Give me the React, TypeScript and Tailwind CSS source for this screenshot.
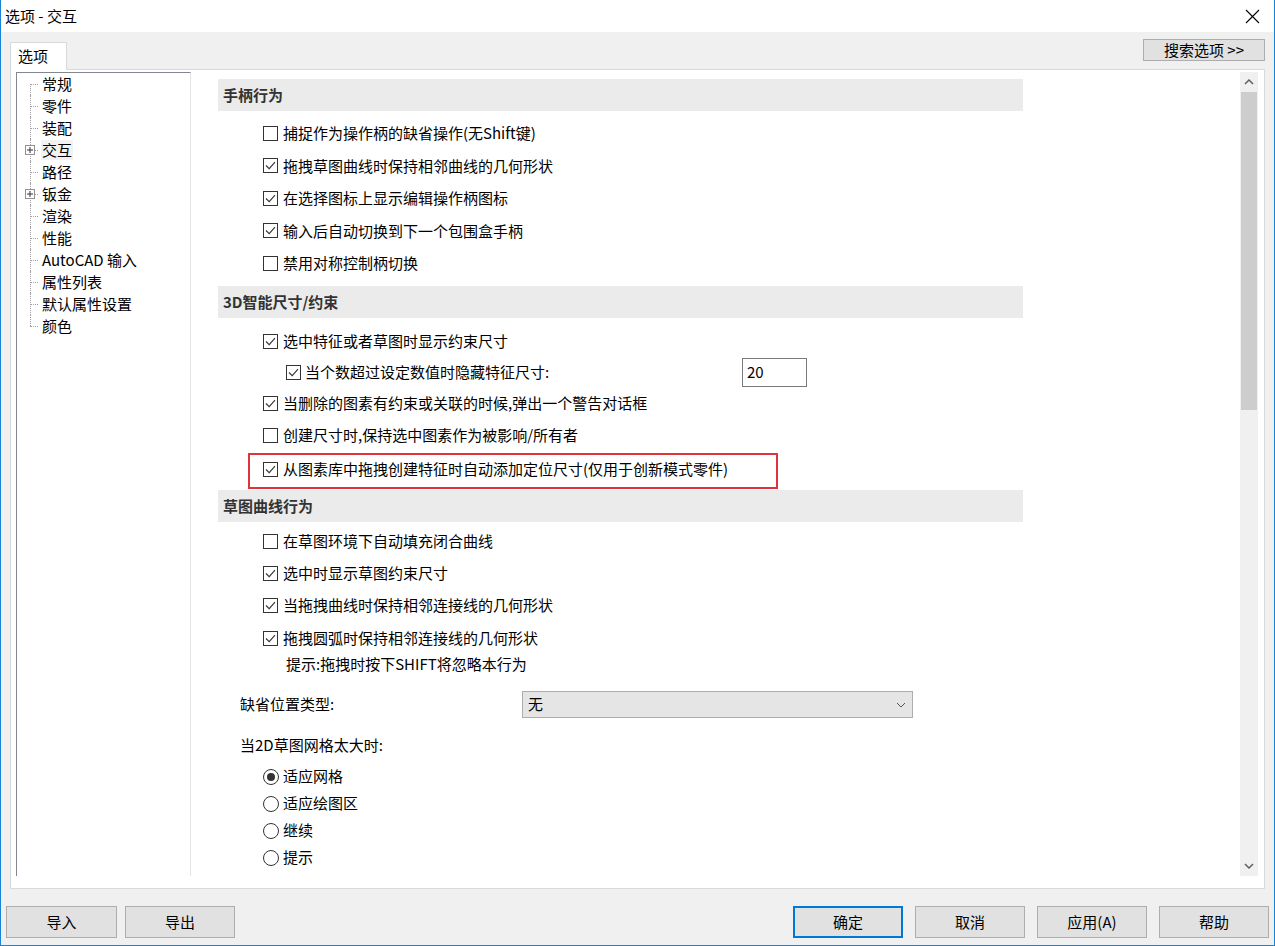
import React from "react";

const treeItems: { label: string; plus?: boolean; selected?: boolean }[] = [
  { label: "常规" },
  { label: "零件" },
  { label: "装配" },
  { label: "交互", plus: true, selected: true },
  { label: "路径" },
  { label: "钣金", plus: true },
  { label: "渲染" },
  { label: "性能" },
  { label: "AutoCAD 输入" },
  { label: "属性列表" },
  { label: "默认属性设置" },
  { label: "颜色" },
];

function Check({ on }: { on: boolean }) {
  return (
    <span className="flex h-[15px] w-[15px] shrink-0 items-center justify-center border border-[#333] bg-white">
      {on && (
        <svg width="13" height="13" viewBox="0 0 13 13">
          <polyline points="2,6.5 5.2,9.7 11,3.2" fill="none" stroke="#333" strokeWidth="1.1" />
        </svg>
      )}
    </span>
  );
}

function Row({ on, text, h = "h-[32.5px]", pl = "pl-[72px]" }: { on: boolean; text: string; h?: string; pl?: string }) {
  return (
    <div className={`flex items-center gap-[5px] ${h} ${pl}`}>
      <Check on={on} />
      <span>{text}</span>
    </div>
  );
}

function Radio({ on, text }: { on: boolean; text: string }) {
  return (
    <div className="flex h-[27px] items-center gap-[4px] pl-[72px]">
      <span className="flex h-[16px] w-[16px] items-center justify-center rounded-full border border-[#333] bg-white">
        {on && <span className="h-[8px] w-[8px] rounded-full bg-[#333]" />}
      </span>
      <span>{text}</span>
    </div>
  );
}

function Header({ text }: { text: string }) {
  return (
    <div className="ml-[27px] flex h-[32px] w-[805px] items-center bg-[#ebebeb] pl-[5px] font-bold text-[#333]">
      {text}
    </div>
  );
}

function Btn({ children, primary, w = "w-[110px]" }: { children: React.ReactNode; primary?: boolean; w?: string }) {
  return (
    <button
      className={`flex h-[32px] ${w} items-center justify-center bg-[#e1e1e1] text-[15px] text-black ${
        primary ? "border-2 border-[#0078d7]" : "border border-[#adadad]"
      }`}
    >
      {children}
    </button>
  );
}

function Chevron({ up }: { up?: boolean }) {
  return (
    <svg width="10" height="6" viewBox="0 0 10 6">
      <polyline
        points={up ? "1,5 5,1 9,5" : "1,1 5,5 9,1"}
        fill="none"
        stroke="#606060"
        strokeWidth="1.5"
      />
    </svg>
  );
}

export default function App() {
  return (
    <div className="flex h-[946px] w-[1275px] flex-col overflow-hidden border-x border-b border-[#1883d7] bg-[#f0f0f0] font-['Noto_Sans_CJK_SC','Noto_Sans',sans-serif] text-[15px] text-black">
      {/* title bar */}
      <div className="flex h-[32px] shrink-0 items-center justify-between bg-white pl-[4px] pr-[14px]">
        <span className="text-[15px]">选项 - 交互</span>
        <svg width="15" height="15" viewBox="0 0 15 15">
          <line x1="1" y1="1" x2="14" y2="14" stroke="#000" strokeWidth="1.1" />
          <line x1="14" y1="1" x2="1" y2="14" stroke="#000" strokeWidth="1.1" />
        </svg>
      </div>

      {/* tab row */}
      <div className="flex h-[37px] shrink-0 items-start pl-[9px] pr-[9px]">
        <div className="relative z-10 mt-[10px] flex h-[28px] w-[57px] items-center border-x border-t border-[#d9d9d9] bg-white pl-[7px]">
          选项
        </div>
        <div className="flex-1" />
        <button className="mt-[7px] flex h-[22px] w-[122px] items-center justify-center border border-[#adadad] bg-[#e1e1e1] text-[15px]">
          搜索选项 &gt;&gt;
        </button>
      </div>

      {/* main panel */}
      <div className="ml-[9px] flex h-[820px] w-[1255px] shrink-0 border border-[#d9d9d9] bg-white pl-[5px] pt-[2px]">
        {/* tree */}
        <div className="h-[804px] w-[175px] shrink-0 border-l border-t border-r border-l-[#828790] border-t-[#828790] border-r-[#e3e3e3] bg-white">
          {treeItems.map((it, i) => (
            <div key={it.label} className="flex h-[22px] items-center">
              <div className="relative ml-[13px] h-full w-[11px] shrink-0">
                <span
                  className={`absolute left-0 border-l border-dotted border-[#a0a0a0] ${
                    i === 0 ? "top-1/2 bottom-0" : i === treeItems.length - 1 ? "top-0 h-1/2" : "top-0 bottom-0"
                  }`}
                />
                <span className="absolute left-0 top-1/2 w-[8px] border-t border-dotted border-[#a0a0a0]" />
                {it.plus && (
                  <span className="absolute left-[-5px] top-[6px] flex h-[10px] w-[10px] items-center justify-center border border-[#919191] bg-white">
                    <svg width="8" height="8" viewBox="0 0 8 8">
                      <line x1="1" y1="4" x2="7" y2="4" stroke="#333" strokeWidth="1" />
                      <line x1="4" y1="1" x2="4" y2="7" stroke="#333" strokeWidth="1" />
                    </svg>
                  </span>
                )}
              </div>
              <span className={`px-[1px] leading-[20px] ${it.selected ? "bg-[#f2f2f2]" : ""}`}>{it.label}</span>
            </div>
          ))}
        </div>

        {/* content */}
        <div className="h-[804px] flex-1 overflow-hidden pt-[7px]">
          <Header text="手柄行为" />
          <div className="mt-[6px]">
            <Row on={false} text="捕捉作为操作柄的缺省操作(无Shift键)" />
            <Row on text="拖拽草图曲线时保持相邻曲线的几何形状" />
            <Row on text="在选择图标上显示编辑操作柄图标" />
            <Row on text="输入后自动切换到下一个包围盒手柄" />
            <Row on={false} text="禁用对称控制柄切换" />
          </div>

          <div className="mt-[6.5px]">
            <Header text="3D智能尺寸/约束" />
          </div>
          <div className="mt-[7px]">
            <Row on text="选中特征或者草图时显示约束尺寸" h="h-[32px]" />
            <div className="flex h-[30px] items-center pl-[95px]">
              <div className="flex w-[456px] items-center gap-[4px]">
                <Check on />
                <span>当个数超过设定数值时隐藏特征尺寸:</span>
              </div>
              <div className="flex h-[29px] w-[65px] items-center border border-[#7a7a7a] bg-white pl-[4px]">20</div>
            </div>
            <Row on text="当删除的图素有约束或关联的时候,弹出一个警告对话框" h="h-[32px]" />
            <Row on={false} text="创建尺寸时,保持选中图素作为被影响/所有者" h="h-[33px]" />
            <div className="ml-[57px] mt-[1px] flex h-[36px] w-[530px] items-center gap-[5px] border-2 border-[#e0333a] pb-[3px] pl-[13px]">
              <Check on />
              <span>从图素库中拖拽创建特征时自动添加定位尺寸(仅用于创新模式零件)</span>
            </div>
          </div>

          <div className="mt-[1px]">
            <Header text="草图曲线行为" />
          </div>
          <div className="mt-[3px]">
            <Row on={false} text="在草图环境下自动填充闭合曲线" h="h-[32px]" />
            <Row on text="选中时显示草图约束尺寸" h="h-[32px]" />
            <Row on text="当拖拽曲线时保持相邻连接线的几何形状" h="h-[33px]" />
            <Row on text="拖拽圆弧时保持相邻连接线的几何形状" h="h-[32px]" />
            <div className="flex h-[20px] items-center pl-[95px]">提示:拖拽时按下SHIFT将忽略本行为</div>
          </div>

          <div className="mt-[17px] flex h-[27px] items-center pl-[49px]">
            <span className="w-[282px] shrink-0">缺省位置类型:</span>
            <div className="flex h-[27px] w-[391px] items-center justify-between border border-[#adadad] bg-[#e5e5e5] pl-[5px] pr-[6px]">
              <span>无</span>
              <svg width="10" height="6" viewBox="0 0 10 6">
                <polyline points="1,1 5,5 9,1" fill="none" stroke="#555" strokeWidth="1" />
              </svg>
            </div>
          </div>

          <div className="mt-[17px] flex h-[20px] items-center pl-[49px]">当2D草图网格太大时:</div>

          <div className="mt-[8px]">
            <Radio on text="适应网格" />
            <Radio on={false} text="适应绘图区" />
            <Radio on={false} text="继续" />
            <Radio on={false} text="提示" />
          </div>
        </div>

        {/* scrollbar */}
        <div className="mr-[6px] flex h-[804px] w-[18px] shrink-0 flex-col bg-[#f0f0f0]">
          <div className="flex h-[20px] items-center justify-center">
            <Chevron up />
          </div>
          <div className="mx-[1px] h-[318px] bg-[#cdcdcd]" />
          <div className="flex-1" />
          <div className="flex h-[20px] items-center justify-center">
            <Chevron />
          </div>
        </div>
      </div>

      {/* bottom buttons */}
      <div className="mt-[17px] flex items-start px-[5px]">
        <Btn w="w-[111px]">导入</Btn>
        <div className="ml-[8px]">
          <Btn>导出</Btn>
        </div>
        <div className="flex-1" />
        <div className="flex gap-[12px]">
          <Btn primary>确定</Btn>
          <Btn>取消</Btn>
          <Btn>应用(A)</Btn>
          <Btn>帮助</Btn>
        </div>
      </div>
    </div>
  );
}
